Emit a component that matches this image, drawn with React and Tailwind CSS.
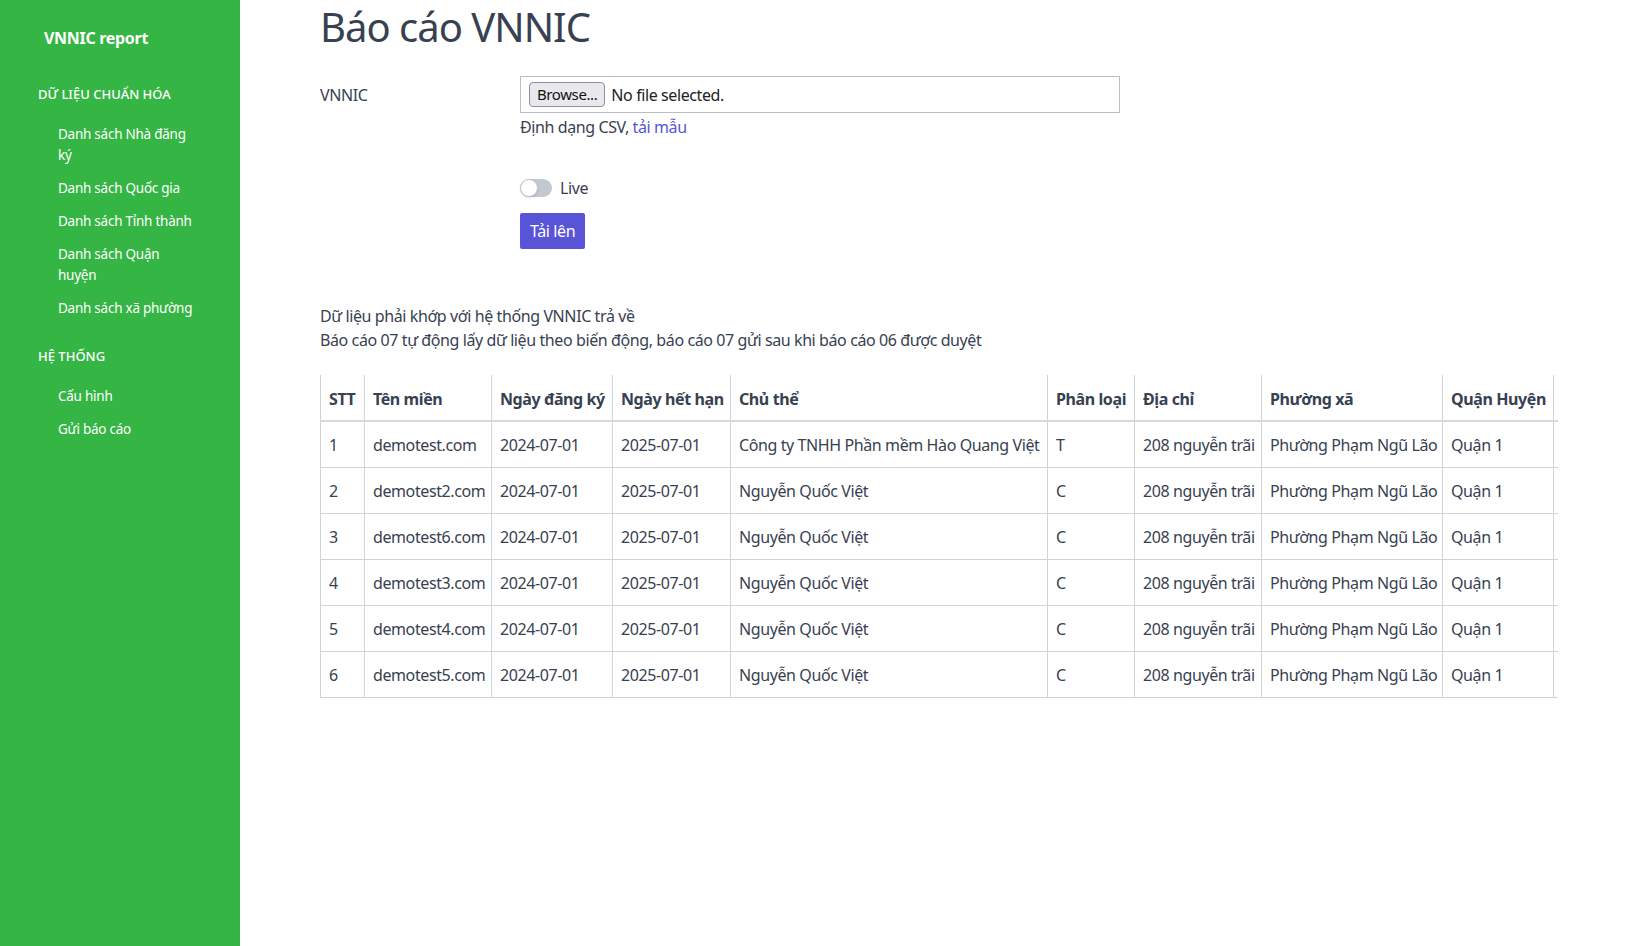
import React from "react";

const FONT = { fontFamily: '"Noto Sans", "Open Sans", Arial, sans-serif' };

const rows = [
  { stt: 1, domain: "demotest.com", owner: "Công ty TNHH Phần mềm Hào Quang Việt", type: "T" },
  { stt: 2, domain: "demotest2.com", owner: "Nguyễn Quốc Việt", type: "C" },
  { stt: 3, domain: "demotest6.com", owner: "Nguyễn Quốc Việt", type: "C" },
  { stt: 4, domain: "demotest3.com", owner: "Nguyễn Quốc Việt", type: "C" },
  { stt: 5, domain: "demotest4.com", owner: "Nguyễn Quốc Việt", type: "C" },
  { stt: 6, domain: "demotest5.com", owner: "Nguyễn Quốc Việt", type: "C" },
];

// last column runs past the clipped edge, only its border shows
const cols = [
  { title: "STT", w: "w-[44px]" },
  { title: "Tên miền", w: "w-[127px]" },
  { title: "Ngày đăng ký", w: "w-[121px]" },
  { title: "Ngày hết hạn", w: "w-[118px]" },
  { title: "Chủ thể", w: "w-[317px]" },
  { title: "Phân loại", w: "w-[87px]" },
  { title: "Địa chỉ", w: "w-[127px]" },
  { title: "Phường xã", w: "w-[181px]" },
  { title: "Quận Huyện", w: "w-[111px]" },
  { title: "", w: "w-[140px]" },
];

function Sidebar() {
  const groups = [
    {
      title: "DỮ LIỆU CHUẨN HÓA",
      items: [
        "Danh sách Nhà đăng ký",
        "Danh sách Quốc gia",
        "Danh sách Tỉnh thành",
        "Danh sách Quận huyện",
        "Danh sách xã phường",
      ],
    },
    { title: "HỆ THỐNG", items: ["Cấu hình", "Gửi báo cáo"] },
  ];

  return (
    <aside className="w-[240px] shrink-0 bg-[#34b544] text-white">
      <div className="pl-[44px] pt-[28px] text-[16px] font-bold leading-[20px] tracking-[-0.3px]">VNNIC report</div>
      {groups.map((g, gi) => (
        <div key={g.title} className={gi === 0 ? "mt-[36px]" : "mt-[21px]"}>
          <div className="pl-[38px] text-[13px] font-medium leading-[20px]">{g.title}</div>
          <ul className="mt-[14px]">
            {g.items.map((it) => (
              <li key={it} className="w-[198px] pl-[58px] py-[6px] text-[13.5px] leading-[21px] tracking-[-0.25px]">
                {it}
              </li>
            ))}
          </ul>
        </div>
      ))}
    </aside>
  );
}

export default function App() {
  return (
    <div className="flex h-screen bg-white text-[#374151]" style={FONT}>
      <Sidebar />
      <main className="min-w-0 flex-1 overflow-hidden px-20 tracking-[-0.4px]">
        <h1 className="text-[40px] leading-[54px] font-normal tracking-[-1px] text-[#374151]">Báo cáo VNNIC</h1>

        <div className="mt-[22px] flex">
          <label className="w-[200px] shrink-0 pt-[7px] text-[16px] leading-[24px]">VNNIC</label>
          <div>
            <div className="flex h-[37px] w-[600px] items-center border border-[#b9bdca] px-2">
              <span className="flex h-[25px] items-center rounded-[4px] border border-[#8f8f9d] bg-[#e9e9ed] px-[7px] text-[15px] text-[#111]">
                Browse...
              </span>
              <span className="ml-[6px] text-[16px] text-[#222]">No file selected.</span>
            </div>
            <div className="mt-[2px] text-[16px] leading-[24px]">
              Định dạng CSV, <a className="text-[#5a55d6]">tải mẫu</a>
            </div>

            <div className="mt-[37px] flex items-center gap-2 leading-[24px]">
              <span className="relative inline-block h-[18px] w-[32px] rounded-full bg-[#c3c8d1]">
                <span className="absolute left-0 top-0 h-[18px] w-[18px] rounded-full border border-[#c3c8d1] bg-white shadow-sm" />
              </span>
              <span className="text-[16px]">Live</span>
            </div>

            <button className="mt-[13px] h-[36px] rounded-[2px] bg-[#5854d8] px-[10px] text-[16px] tracking-[-0.4px] text-white">
              Tải lên
            </button>
          </div>
        </div>

        <div className="mt-[55px] text-[16px] leading-[24px]">
          <p>Dữ liệu phải khớp với hệ thống VNNIC trả về</p>
          <p>Báo cáo 07 tự động lấy dữ liệu theo biến động, báo cáo 07 gửi sau khi báo cáo 06 được duyệt</p>
        </div>

        <div className="mt-[23px] overflow-hidden">
          <table className="w-[1373px] table-fixed border-collapse text-[16px] leading-[24px]">
            <colgroup>
              {cols.map((c, i) => (
                <col key={i} className={c.w} />
              ))}
            </colgroup>
            <thead>
              <tr className="h-[46px]">
                {cols.map((c, i) => (
                  <th
                    key={i}
                    className="overflow-hidden whitespace-nowrap border-x border-b-2 border-x-[#d0d3d8] border-b-[#d6d9de] px-2 pt-[2px] text-left font-bold"
                  >
                    {c.title}
                  </th>
                ))}
              </tr>
            </thead>
            <tbody>
              {rows.map((r) => (
                <tr key={r.stt} className="h-[46px]">
                  {[
                    r.stt,
                    r.domain,
                    "2024-07-01",
                    "2025-07-01",
                    r.owner,
                    r.type,
                    "208 nguyễn trãi",
                    "Phường Phạm Ngũ Lão",
                    "Quận 1",
                    "",
                  ].map((v, i) => (
                    <td key={i} className="overflow-hidden whitespace-nowrap border border-[#d0d3d8] px-2 pt-[2px]">
                      {v}
                    </td>
                  ))}
                </tr>
              ))}
            </tbody>
          </table>
        </div>
      </main>
    </div>
  );
}
